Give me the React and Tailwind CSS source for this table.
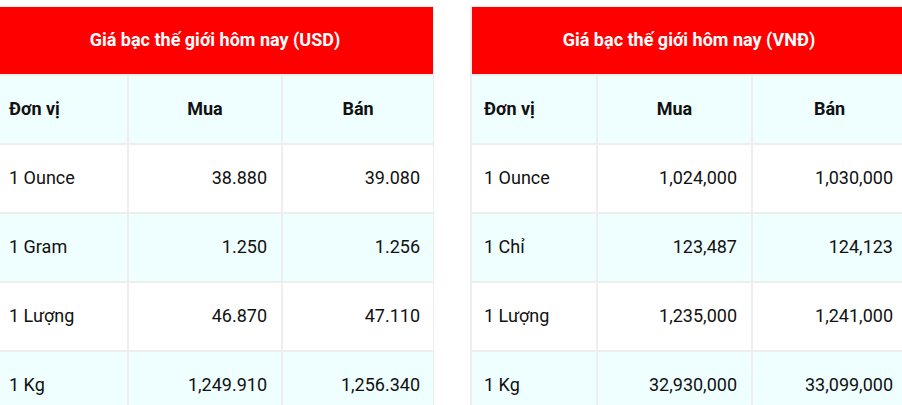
const tables = [
  {
    title: "Giá bạc thế giới hôm nay (USD)",
    cols: ["w-[132px]", "w-[154px]", "w-[151px]"],
    rows: [
      ["1 Ounce", "38.880", "39.080"],
      ["1 Gram", "1.250", "1.256"],
      ["1 Lượng", "46.870", "47.110"],
      ["1 Kg", "1,249.910", "1,256.340"],
    ],
  },
  {
    title: "Giá bạc thế giới hôm nay (VNĐ)",
    cols: ["w-[126px]", "w-[155px]", "w-[154px]"],
    rows: [
      ["1 Ounce", "1,024,000", "1,030,000"],
      ["1 Chỉ", "123,487", "124,123"],
      ["1 Lượng", "1,235,000", "1,241,000"],
      ["1 Kg", "32,930,000", "33,099,000"],
    ],
  },
];

const PriceTable = ({ data }) => {
  return (
    <table className="table-fixed border-separate border-spacing-0 border-l-2 border-t border-[#eeeeee] text-[18px] text-[#111]">
      <colgroup>
        {data.cols.map((c, i) => (
          <col key={i} className={c} />
        ))}
      </colgroup>
      <thead>
        <tr className="h-[69px]">
          <th colSpan={3} className="bg-[#ff0000] text-white font-bold text-center pb-[2px] border-b-2 border-r border-[#eeeeee]">
            {data.title}
          </th>
        </tr>
        <tr className="h-[69px] bg-[#effefe]">
          <th className="text-left font-bold px-3 pb-[2px] border-b-2 border-r-2 border-[#eeeeee]">Đơn vị</th>
          <th className="text-center font-bold px-3 pb-[2px] border-b-2 border-r-2 border-[#eeeeee]">Mua</th>
          <th className="text-center font-bold px-3 pb-[2px] border-b-2 border-r border-[#eeeeee]">Bán</th>
        </tr>
      </thead>
      <tbody>
        {data.rows.map((r, i) => (
          <tr key={i} className={`h-[69px] ${i % 2 === 1 ? "bg-[#effefe]" : "bg-white"}`}>
            <td className="text-left px-3 pb-[2px] border-b-2 border-r-2 border-[#eeeeee]">{r[0]}</td>
            <td className="text-right pl-3 pr-[14px] pb-[2px] border-b-2 border-r-2 border-[#eeeeee]">{r[1]}</td>
            <td className="text-right pl-3 pr-[13px] pb-[2px] border-b-2 border-r border-[#eeeeee]">{r[2]}</td>
          </tr>
        ))}
      </tbody>
    </table>
  );
};

export default function App() {
  return (
    <div className="w-[902px] h-[405px] overflow-hidden bg-white font-['Roboto',sans-serif]">
      <div className="flex gap-[36px] pt-[6px] ml-[-5px] w-[932px]">
        {tables.map((t, i) => (
          <PriceTable key={i} data={t} />
        ))}
      </div>
    </div>
  );
}
